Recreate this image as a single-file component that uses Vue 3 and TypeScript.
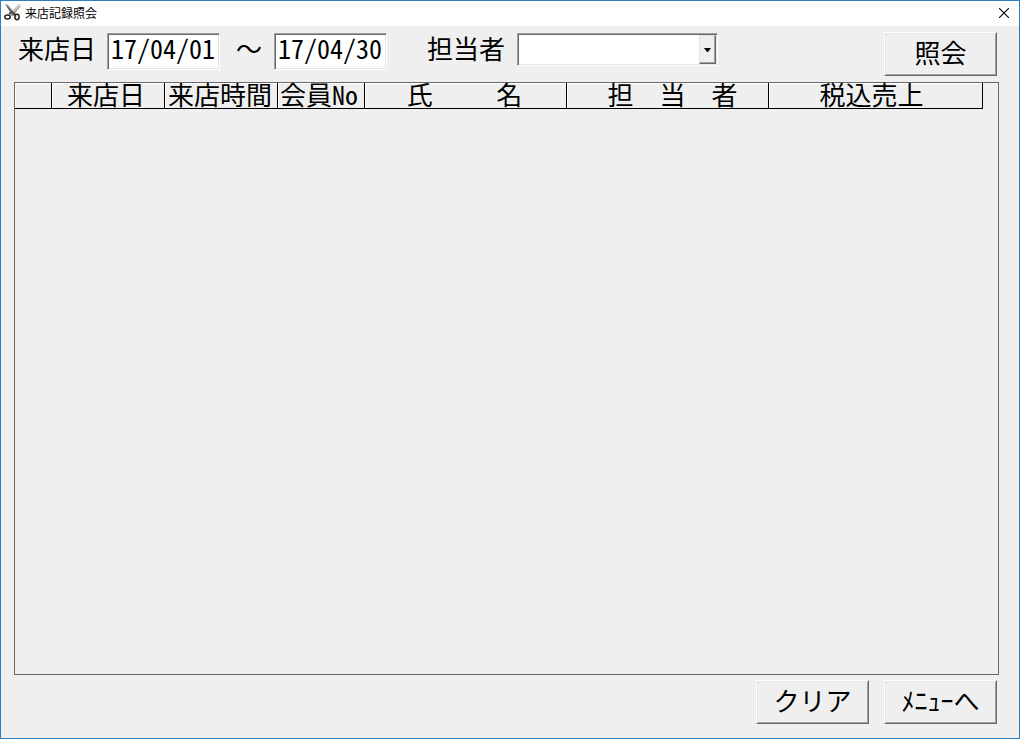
<script setup lang="ts">
import { ref } from 'vue'

interface Column {
  key: string
  label: string
}

const dateFrom = ref('17/04/01')
const dateTo = ref('17/04/30')
const staff = ref('')

const columns: Column[] = [
  { key: 'mark', label: '' },
  { key: 'date', label: '来店日' },
  { key: 'time', label: '来店時間' },
  { key: 'member', label: '会員No' },
  { key: 'name', label: '氏\u3000  \u3000名' },
  { key: 'staff', label: '担\u3000当\u3000者' },
  { key: 'sales', label: '税込売上' },
]

function clearForm() {
  dateFrom.value = ''
  dateTo.value = ''
  staff.value = ''
}
</script>

<template>
  <div class="window">
    <header class="titlebar">
      <svg class="app-icon" viewBox="0 0 17 17" aria-hidden="true">
        <path d="M1 0L4 1L12 10L9 12Z" fill="#8a8a8a" />
        <path d="M1 0L9 12L8 8Z" fill="#555" />
        <path d="M15 0L17 2L8 12L5 10Z" fill="#c4c4c4" />
        <path d="M17 2L8 12L7 11Z" fill="#777" />
        <path d="M5 10L8 8L11 11" fill="none" stroke="#444" stroke-width="2" />
        <ellipse cx="3.5" cy="13" rx="2.7" ry="2" fill="#fff" stroke="#222" stroke-width="1.5" />
        <ellipse cx="13" cy="13" rx="2.1" ry="2.7" fill="#fff" stroke="#222" stroke-width="1.5" />
      </svg>
      <h1 class="title">来店記録照会</h1>
      <button class="close" type="button" aria-label="閉じる">
        <svg viewBox="0 0 10 10" aria-hidden="true">
          <path d="M0 0L10 10M10 0L0 10" fill="none" stroke="#000" stroke-width="1.1" />
        </svg>
      </button>
    </header>

    <form class="toolbar" @submit.prevent>
      <label for="date-from">来店日</label>
      <input id="date-from" v-model="dateFrom" class="date first" type="text" />
      <span class="tilde">～</span>
      <input v-model="dateTo" class="date" type="text" aria-label="来店日 終了" />
      <label class="staff-label" for="staff">担当者</label>
      <div class="combo">
        <select id="staff" v-model="staff">
          <option value=""></option>
        </select>
        <span class="arrow">
          <svg viewBox="0 0 7 4" aria-hidden="true"><path d="M0 0H7L4 4H3Z" /></svg>
        </span>
      </div>
      <button class="btn search" type="submit">照会</button>
    </form>

    <main class="grid">
      <table>
        <colgroup>
          <col v-for="c in columns" :key="c.key" :class="'col-' + c.key" />
        </colgroup>
        <thead>
          <tr>
            <th v-for="c in columns" :key="c.key" :class="'head-' + c.key" scope="col">{{ c.label }}</th>
          </tr>
        </thead>
      </table>
    </main>

    <footer class="actions">
      <button class="btn" type="button" @click="clearForm">クリア</button>
      <button class="btn" type="button">ﾒﾆｭｰへ</button>
    </footer>
  </div>
</template>

<style>
body {
  margin: 0;
}
</style>

<style scoped>
.window,
.window * {
  box-sizing: border-box;
}

.window {
  display: flex;
  flex-direction: column;
  min-height: 100vh;
  border: 1px solid #2b7fc0;
  background: #efefef;
  color: #000;
  font-family: "Noto Sans CJK JP", sans-serif;
  font-size: 26px;
  line-height: 26px;
  font-feature-settings: "hwid";
}

.titlebar {
  display: flex;
  align-items: center;
  height: 25px;
  padding: 0 10px 2px 3px;
  background: #fff;
}

.app-icon {
  width: 17px;
  height: 17px;
}

.title {
  flex: 1;
  margin: 0 0 0 4px;
  font-size: 12px;
  font-weight: 400;
  line-height: 16px;
}

.close {
  display: flex;
  padding: 0;
  border: 0;
  background: none;
}

.close svg {
  width: 10px;
  height: 10px;
}

.toolbar {
  display: flex;
  align-items: flex-start;
  height: 56px;
  padding: 6px 22px 0 17px;
}

.toolbar label,
.tilde {
  padding-top: 3px;
  white-space: nowrap;
}

input,
select,
.btn {
  font: inherit;
  font-feature-settings: inherit;
  color: inherit;
  border-radius: 0;
  outline: 0;
}

.date,
.combo {
  border: 1px solid;
  border-color: #a0a0a0 #fff #fff #a0a0a0;
  background: #fff;
  box-shadow: inset 1px 1px #696969, inset -1px -1px #e3e3e3;
}

.date {
  width: 113px;
  height: 37px;
  margin-top: 1px;
  padding: 0 0 9px 3px;
}

.date.first {
  margin-left: 11px;
}

.tilde {
  margin: 0 12px 0 16px;
  font-feature-settings: normal;
}

.staff-label {
  margin: 0 12px 0 40px;
}

.combo {
  display: flex;
  width: 201px;
  height: 33px;
  margin-top: 1px;
  padding: 1px;
}

.combo select {
  flex: 1;
  min-width: 0;
  padding: 0 4px;
  appearance: none;
  border: 0;
  background: transparent;
}

.arrow {
  display: flex;
  align-items: center;
  justify-content: center;
  width: 17px;
  border: 1px solid;
  border-color: #e3e3e3 #696969 #696969 #e3e3e3;
  background: #efefef;
  box-shadow: inset -1px -1px #a0a0a0;
  pointer-events: none;
}

.arrow svg {
  width: 7px;
  height: 4px;
}

.btn {
  width: 113px;
  height: 44px;
  padding: 0 0 4px;
  border: 1px solid;
  border-color: #fff #696969 #696969 #fff;
  background: #efefef;
  box-shadow: inset 1px 1px #e3e3e3, inset -1px -1px #a0a0a0;
  white-space: nowrap;
}

.search {
  margin-left: auto;
}

.grid {
  flex: 1;
  margin: 0 20px 0 13px;
  border: 1px solid #696969;
}

table {
  table-layout: fixed;
  width: 968px;
  border-collapse: separate;
  border-spacing: 0;
}

.col-mark { width: 37px; }
.col-date { width: 113px; }
.col-time { width: 113px; }
.col-member { width: 87px; }
.col-name { width: 202px; }
.col-staff { width: 202px; }
.col-sales { width: 214px; }

th {
  height: 26px;
  padding: 0 2px 3px 0;
  border-right: 1px solid #000;
  border-bottom: 1px solid #000;
  box-shadow: inset 1px 1px #fff;
  font-weight: 400;
  line-height: 22px;
  text-align: center;
  white-space: pre;
}

.head-date,
.head-member {
  padding-right: 4px;
}

.head-name,
.head-staff {
  font-feature-settings: normal;
}

.head-staff { padding-left: 12px; }
.head-sales { padding-right: 8px; }

.actions {
  display: flex;
  justify-content: flex-end;
  gap: 15px;
  padding: 5px 22px 14px;
}
</style>
